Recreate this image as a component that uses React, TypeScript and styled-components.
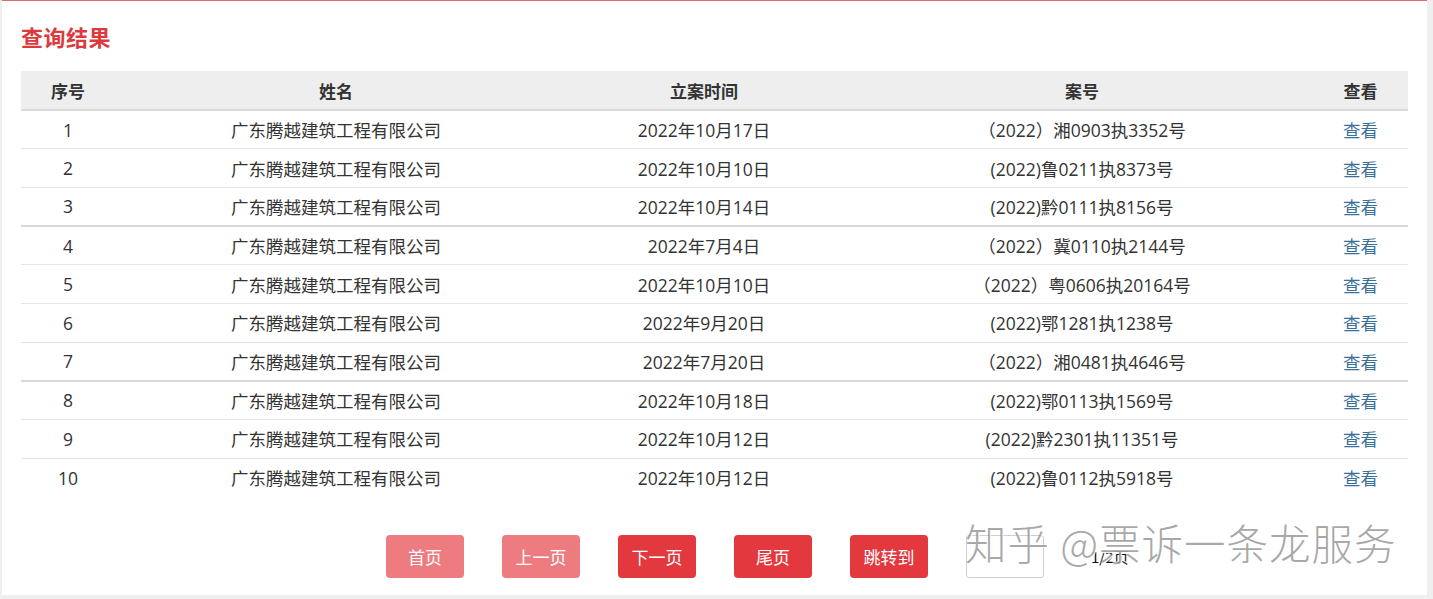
import React from "react";
import styled, { createGlobalStyle } from "styled-components";

const Global = createGlobalStyle`
  html, body { margin: 0; padding: 0; background: #efefef; }
  body { font-family: "Open Sans", "Noto Sans CJK SC", sans-serif; color: #333; }
`;

const Panel = styled.div`
  position: relative;
  margin-left: 2px;
  width: 1425px;
  height: 595px;
  background: #fff;
  border-top: 1px solid #e06a6e;
  box-sizing: border-box;
  padding: 18px 19px 0 19px;
`;

const Title = styled.h2`
  margin: 0;
  font-family: "Noto Sans CJK SC", sans-serif;
  font-size: 22px;
  line-height: 34px;
  font-weight: 700;
  color: #dd3a40;
  letter-spacing: 0.5px;
`;

const Table = styled.table`
  margin-top: 18px;
  width: 1387px;
  border-collapse: collapse;
  table-layout: fixed;
  font-size: 17.5px;
`;

const HeadCell = styled.th<{ $w: number }>`
  width: ${(p) => p.$w}px;
  height: 38px;
  padding: 0;
  background: #eeeeee;
  border-bottom: 2px solid #dadada;
  font-family: "Noto Sans CJK SC", sans-serif;
  font-size: 17px;
  font-weight: 700;
  color: #333;
  text-align: center;
`;

const Row = styled.tr<{ $last?: boolean; $strong?: boolean }>`
  height: 38.7px;
  border-bottom: ${(p) =>
    p.$last ? "none" : p.$strong ? "2px solid #d8d8d8" : "1px solid #e3e3e3"};
`;

const Cell = styled.td`
  padding: 0;
  text-align: center;
  color: #333;
  white-space: nowrap;
`;

const LinkCell = styled(Cell)`
  color: #3b7199;
`;

const Pager = styled.div`
  display: flex;
  align-items: center;
  margin-top: 38px;
  padding-left: 365px;
  font-family: "Noto Sans CJK SC", sans-serif;
`;

const PageButton = styled.div<{ $dim?: boolean }>`
  width: 78px;
  height: 43px;
  margin-right: 38px;
  border-radius: 4px;
  background: ${(p) => (p.$dim ? "#ee7b7f" : "#e2383e")};
  color: #fff;
  font-size: 17px;
  display: flex;
  align-items: center;
  justify-content: center;
`;

const PageInput = styled.div`
  width: 76px;
  height: 41px;
  border: 1px solid #cfcfcf;
  border-radius: 3px;
  background: #fff;
`;

const PageInfo = styled.span`
  margin-left: 47px;
  font-size: 15px;
  color: #111;
`;

const Watermark = styled.div`
  position: absolute;
  left: 963px;
  top: 512px;
  font-family: "Noto Sans CJK SC", sans-serif;
  font-size: 41.5px;
  font-weight: 300;
  line-height: 58px;
  color: rgba(140, 140, 140, 0.75);
  text-shadow: 1px 1px 0 rgba(255, 255, 255, 0.9);
  white-space: nowrap;
  pointer-events: none;
  letter-spacing: 1px;
`;

const cols = [
  { t: "序号", w: 94 },
  { t: "姓名", w: 442 },
  { t: "立案时间", w: 294 },
  { t: "案号", w: 462 },
  { t: "查看", w: 95 },
];

const rows = [
  ["2022年10月17日", "（2022）湘0903执3352号"],
  ["2022年10月10日", "(2022)鲁0211执8373号"],
  ["2022年10月14日", "(2022)黔0111执8156号"],
  ["2022年7月4日", "（2022）冀0110执2144号"],
  ["2022年10月10日", "（2022）粤0606执20164号"],
  ["2022年9月20日", "(2022)鄂1281执1238号"],
  ["2022年7月20日", "（2022）湘0481执4646号"],
  ["2022年10月18日", "(2022)鄂0113执1569号"],
  ["2022年10月12日", "(2022)黔2301执11351号"],
  ["2022年10月12日", "(2022)鲁0112执5918号"],
];

export default function App() {
  return (
    <>
      <Global />
      <Panel>
        <Title>查询结果</Title>
        <Table>
          <thead>
            <tr>
              {cols.map((c) => (
                <HeadCell key={c.t} $w={c.w}>
                  {c.t}
                </HeadCell>
              ))}
            </tr>
          </thead>
          <tbody>
            {rows.map((r, i) => (
              <Row key={i} $last={i === rows.length - 1} $strong={i === 2 || i === 6}>
                <Cell>{i + 1}</Cell>
                <Cell>广东腾越建筑工程有限公司</Cell>
                <Cell>{r[0]}</Cell>
                <Cell>{r[1]}</Cell>
                <LinkCell>查看</LinkCell>
              </Row>
            ))}
          </tbody>
        </Table>
        <Pager>
          <PageButton $dim>首页</PageButton>
          <PageButton $dim>上一页</PageButton>
          <PageButton>下一页</PageButton>
          <PageButton>尾页</PageButton>
          <PageButton>跳转到</PageButton>
          <PageInput />
          <PageInfo>1/2页</PageInfo>
        </Pager>
        <Watermark>知乎 @票诉一条龙服务</Watermark>
      </Panel>
    </>
  );
}
